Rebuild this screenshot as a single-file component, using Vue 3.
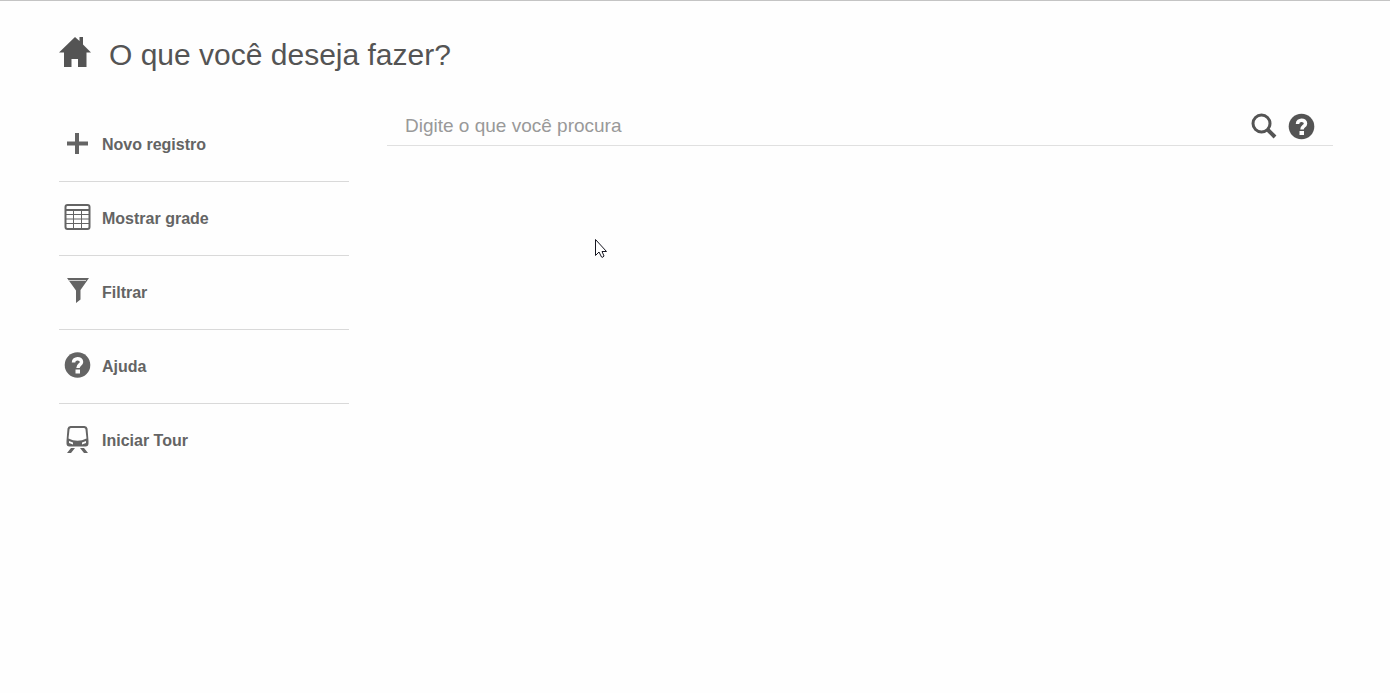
<script setup>
import { ref } from 'vue'

const query = ref('')
const actions = [
  { id: 'new', label: 'Novo registro' },
  { id: 'grid', label: 'Mostrar grade' },
  { id: 'filter', label: 'Filtrar' },
  { id: 'help', label: 'Ajuda' },
  { id: 'tour', label: 'Iniciar Tour' },
]
</script>

<template>
  <div class="page">
    <header class="header">
      <svg class="home" viewBox="0 0 32 32" aria-hidden="true">
        <path fill="currentColor" d="M0 16.500 16 1l4.500 4V1H24v7.500l8 8h-4.500V31H19v-8h-6.500v8H5V16.500z" />
      </svg>
      <h1>O que você deseja fazer?</h1>
    </header>

    <div class="content">
      <nav class="actions" aria-label="Ações">
        <button v-for="a in actions" :key="a.id" type="button" class="action">
          <svg class="icon" viewBox="0 0 26 26" aria-hidden="true">
            <path v-if="a.id === 'new'" fill="currentColor" d="M11 3h4v8.500h9v4h-9V24h-4v-8.500H3v-4h8z" />
            <g v-else-if="a.id === 'grid'" fill="none" stroke="currentColor">
              <rect x="1.500" y="1" width="24" height="24" rx="2" stroke-width="2" />
              <path stroke-width="2" d="M2 6h23" />
              <path stroke-width="1" d="M2 10.500h23M2 15h23M2 19.500h23M9.500 7v17M17.500 7v17" />
            </g>
            <g v-else-if="a.id === 'filter'">
              <path fill="currentColor" d="M3 0h22l-8.500 12v9.500L12 25V12.500z" />
              <path stroke="#cfcfcf" d="M5 2.500h17" />
            </g>
            <g v-else-if="a.id === 'help'">
              <circle cx="13.500" cy="13" r="12.800" fill="currentColor" />
              <path fill="none" stroke="#fefefe" stroke-width="3.500" d="M9.500 10.500C9.500 5.500 17.500 5.500 17.500 10c0 3-3.500 2.500-3.500 6" />
              <path fill="#fefefe" d="M11.500 17.500h4.500v4h-4.500z" />
            </g>
            <g v-else>
              <path fill="currentColor" fill-rule="evenodd" d="M6.500 0h14q2.500 0 3 2.500L24.500 15v2.500q0 3-3 3h-16q-3 0-3-3V15L3.500 2.500Q4 0 6.500 0zM7 2Q5.500 2 5.500 3.500L4.500 12.500q9 4.500 18 0L21.500 3.500Q21.500 2 20 2zM5 15v2l4 1.500v-2zM22 15v2l-4 1.500v-2z" />
              <path fill="currentColor" d="M7 22h4l-4 5H3zM16 22h4l4 5h-4z" />
            </g>
          </svg>
          <span>{{ a.label }}</span>
        </button>
      </nav>

      <form class="search" role="search" @submit.prevent>
        <input v-model="query" type="text" aria-label="Digite o que você procura" placeholder="Digite o que você procura" />
        <button type="submit" aria-label="Pesquisar">
          <svg class="icon" viewBox="0 0 26 26" aria-hidden="true">
            <circle cx="10.500" cy="9.500" r="8.500" fill="none" stroke="currentColor" stroke-width="3" />
            <path fill="none" stroke="currentColor" stroke-width="4" d="m16.500 15.500 7.500 7.500" />
          </svg>
        </button>
        <button type="button" aria-label="Ajuda da pesquisa">
          <svg class="icon" viewBox="0 0 26 26" aria-hidden="true">
            <circle cx="12.500" cy="12.500" r="12.800" fill="currentColor" />
            <path fill="none" stroke="#fefefe" stroke-width="3.500" d="M8.500 10C8.500 5 16.500 5 16.500 9.500c0 3-3.500 2.500-3.500 6" />
            <path fill="#fefefe" d="M10.500 17H15v4h-4.500z" />
          </svg>
        </button>
      </form>
    </div>

    <svg class="pointer" viewBox="0 0 14 21" aria-hidden="true">
      <path fill="#fff" stroke="#15151f" d="M1.500 1.500v16l3.500-3.500 2.500 5q1.500 1 2.500-1l-2-4.500h4.500z" />
    </svg>
  </div>
</template>

<style>
body {
  margin: 0;
  background: #fefefe;
}
</style>

<style scoped>
.page {
  position: relative;
  border-top: 1px solid #c4c4c4;
  padding: 33px 57px 32px 59px;
  font-family: "Liberation Sans", Arial, sans-serif;
  color: #545454;
}
.header {
  display: flex;
  align-items: center;
  gap: 18px;
  height: 42px;
}
.home {
  width: 32px;
  height: 32px;
  margin-bottom: 6px;
}
h1 {
  margin: 0;
  font-size: 30px;
  line-height: 42px;
  font-weight: 400;
}
.content {
  display: grid;
  grid-template-columns: 290px 1fr;
  gap: 38px;
  align-items: start;
  margin-top: 32px;
}
.actions {
  display: flex;
  flex-direction: column;
}
.action {
  display: flex;
  align-items: center;
  gap: 12px;
  height: 74px;
  padding: 0 5px;
  border: 0;
  border-bottom: 1px solid #d9d9d9;
  background: none;
  color: #646464;
  font: bold 16px/20px "Liberation Sans", Arial, sans-serif;
  text-align: left;
}
.action:last-child {
  border-bottom: 0;
}
.icon {
  display: block;
  flex: none;
  width: 26px;
  height: 26px;
  overflow: visible;
}
.action .icon {
  margin-bottom: 4px;
}
.search {
  display: flex;
  align-items: center;
  gap: 12px;
  height: 37px;
  padding: 0 18px;
  border-bottom: 1px solid #e0e0e0;
}
.search input {
  flex: 1;
  min-width: 0;
  height: 36px;
  padding: 0 0 2px;
  border: 0;
  outline: 0;
  background: none;
  color: #545454;
  font: 19px/24px "Liberation Sans", Arial, sans-serif;
}
.search input::placeholder {
  color: #999;
  opacity: 1;
}
.search button {
  padding: 0;
  border: 0;
  background: none;
  color: #545454;
}
.pointer {
  position: absolute;
  left: 594px;
  top: 237px;
  width: 14px;
  height: 21px;
}
</style>
